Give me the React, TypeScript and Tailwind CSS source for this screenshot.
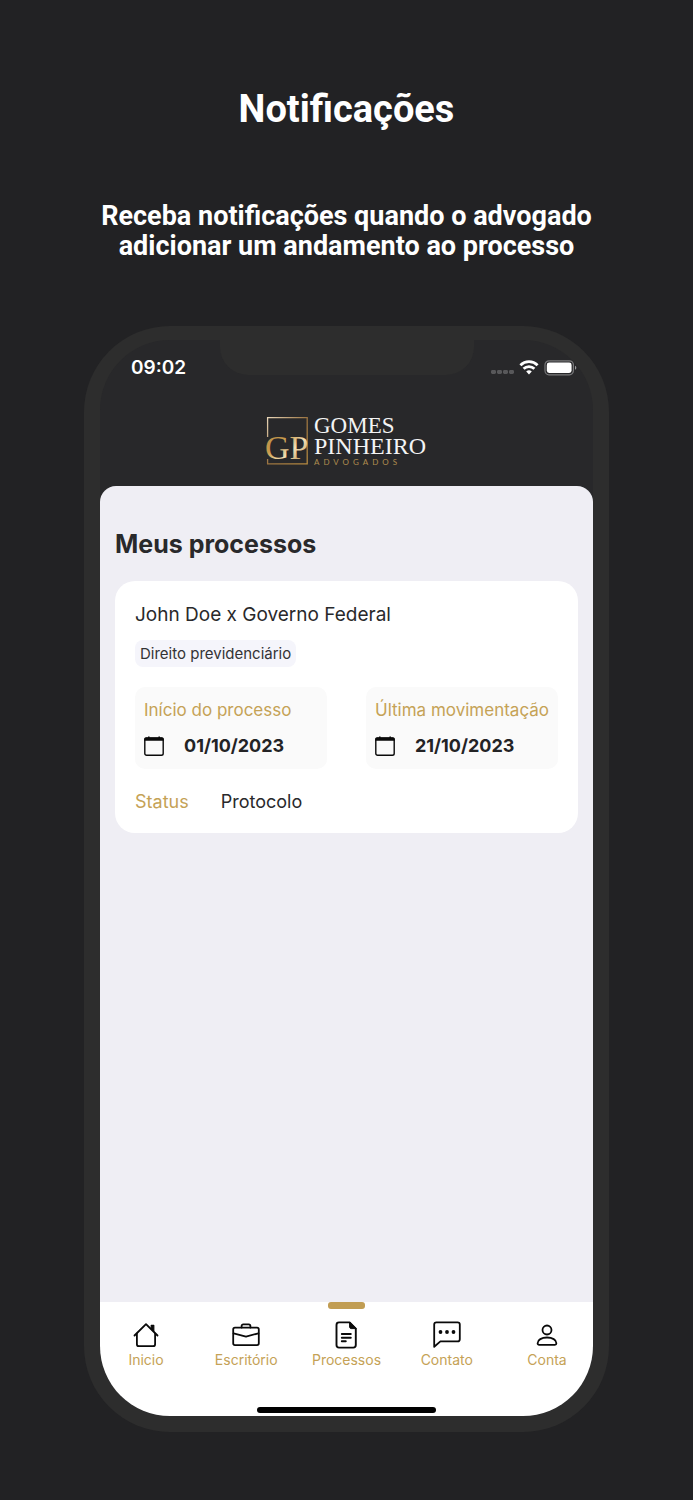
import type { ReactNode } from "react";

type Tab = {
  label: string;
  icon: ReactNode;
  active?: boolean;
};

const HomeIcon = () => (
  <svg viewBox="0 0 28 28" className="size-7" fill="none" stroke="#0a0a0a" strokeWidth="1.8" strokeLinecap="round" strokeLinejoin="round" aria-hidden="true">
    <path d="M2.5 14.5 14 3.2l11.5 11.3" />
    <path d="M4.9 12.6v10.6c0 1.1.9 2 2 2h14.2c1.1 0 2-.9 2-2V12.6" />
    <path d="M19.2 4.4h2.6v6l-2.6-2.5z" fill="#0a0a0a" strokeWidth="1.2" />
  </svg>
);

const BriefcaseIcon = () => (
  <svg viewBox="0 0 28 28" className="size-7" fill="none" stroke="#0a0a0a" strokeWidth="1.8" strokeLinecap="round" strokeLinejoin="round" aria-hidden="true">
    <rect x="1.2" y="6.7" width="25.6" height="17.4" rx="1.8" />
    <path d="M9.6 6.5V5c0-1 .7-1.7 1.7-1.7h5.4c1 0 1.7.7 1.7 1.7v1.5" />
    <path d="M1.6 12.3 14 15.6l12.4-3.3" />
  </svg>
);

const DocumentIcon = () => (
  <svg viewBox="0 0 28 28" className="size-7" fill="none" stroke="#0a0a0a" strokeWidth="1.9" strokeLinecap="round" strokeLinejoin="round" aria-hidden="true">
    <path d="M17.6 1.4H7c-1.4 0-2.5 1.1-2.5 2.5v20.2c0 1.4 1.1 2.5 2.5 2.5h14.3c1.4 0 2.5-1.1 2.5-2.5V7.6z" />
    <path d="M17.6 1.4v4.7c0 .8.7 1.5 1.5 1.5h4.7z" fill="#0a0a0a" strokeWidth="1" />
    <path d="M9.8 13h9M9.8 16.7h9M9.8 20.3h4" />
  </svg>
);

const ChatIcon = () => (
  <svg viewBox="0 0 28 28" className="size-7" fill="none" stroke="#0a0a0a" strokeWidth="1.8" strokeLinecap="round" strokeLinejoin="round" aria-hidden="true">
    <path d="M1.2 25.8V3.6c0-1.2 1-2.2 2.2-2.2h21.2c1.2 0 2.2 1 2.2 2.2v14.6c0 1.2-1 2.2-2.2 2.2H7.4z" />
    <g fill="#0a0a0a" stroke="none">
      <circle cx="7.5" cy="11" r="1.9" />
      <circle cx="14" cy="11" r="1.9" />
      <circle cx="20.5" cy="11" r="1.9" />
    </g>
  </svg>
);

const PersonIcon = () => (
  <svg viewBox="0 0 28 28" className="size-7" fill="none" stroke="#0a0a0a" strokeWidth="1.8" strokeLinejoin="round" aria-hidden="true">
    <circle cx="14" cy="9" r="4.5" />
    <path d="M4.6 22.3c0-3.4 4-5.8 9.4-5.8s9.4 2.4 9.4 5.8c0 .9-.6 1.5-1.5 1.5H6.1c-.9 0-1.5-.6-1.5-1.5z" />
  </svg>
);

const CalendarIcon = () => (
  <svg viewBox="0 0 20 20" className="size-5" fill="none" aria-hidden="true">
    <rect x=".8" y="2.2" width="18.4" height="17" rx="1.8" stroke="#0a0a0a" strokeWidth="1.4" />
    <path d="M.2 4.8V3c0-1 .8-1.8 1.8-1.8h2V.4h1.6v.8h8.8V.4H16v.8h2c1 0 1.8.8 1.8 1.8v1.8z" fill="#0a0a0a" />
  </svg>
);

const Logo = () => (
  <svg viewBox="0 -8 162 60" className="h-[60px] w-[162px]" role="img" aria-label="Gomes Pinheiro Advogados">
    <defs>
      <linearGradient id="gold" x1="0" y1="0" x2="1" y2="1">
        <stop offset="0" stopColor="#b08a4a" />
        <stop offset=".35" stopColor="#c79a4b" />
        <stop offset=".6" stopColor="#f3dfb4" />
        <stop offset="1" stopColor="#a87a32" />
      </linearGradient>
      <linearGradient id="frame" x1="0" y1="0" x2="1" y2="1">
        <stop offset="0" stopColor="#e8d6b8" />
        <stop offset=".5" stopColor="#9a7340" />
        <stop offset="1" stopColor="#b5893f" />
      </linearGradient>
    </defs>
    <path d="M1.6 21V1.6h39.6v46.2H1.6V43" fill="none" stroke="url(#frame)" strokeWidth="1.3" />
    <text x="-1" y="43" fontSize="34" fill="url(#gold)" className="font-['Liberation_Serif',serif]">GP</text>
    <g fill="#f4f4f4" className="font-['Liberation_Serif',serif]">
      <text x="48" y="17" fontSize="23">GOMES</text>
      <text x="48" y="38" fontSize="24">PINHEIRO</text>
    </g>
    <text x="48" y="49" fontSize="8" fill="#b08d4f" className="font-[Lato,sans-serif] tracking-[4px]">ADVOGADOS</text>
  </svg>
);

const StatusIcons = () => (
  <svg viewBox="0 0 88 18" className="h-[18px] w-[88px]" aria-hidden="true">
    <g fill="#58585a">
      <rect x="1" y="11" width="5" height="4" rx="1.4" />
      <rect x="7" y="11" width="5" height="4" rx="1.4" />
      <rect x="13" y="11" width="5" height="4" rx="1.4" />
      <rect x="19" y="11" width="5" height="4" rx="1.4" />
    </g>
    <g fill="none" stroke="#fff" strokeWidth="2.8">
      <path d="M30.4 6.2a12.3 12.3 0 0 1 17.2 0" />
      <path d="M33.6 9.8a7.8 7.8 0 0 1 10.8 0" />
    </g>
    <path d="M36.2 12.4a4.2 4.2 0 0 1 5.6 0L39 15.4z" fill="#fff" />
    <rect x="55" y="1.8" width="28.4" height="14" rx="4" fill="none" stroke="#78787a" strokeWidth="1.2" />
    <rect x="56.8" y="3.6" width="24.8" height="10.4" rx="2.4" fill="#fff" />
    <path d="M85 6.8c1.8.8 1.8 3.2 0 4z" fill="#9a9a9c" />
  </svg>
);

const tabs: Tab[] = [
  { label: "Inicio", icon: <HomeIcon /> },
  { label: "Escritório", icon: <BriefcaseIcon /> },
  { label: "Processos", icon: <DocumentIcon />, active: true },
  { label: "Contato", icon: <ChatIcon /> },
  { label: "Conta", icon: <PersonIcon /> },
];

const dates = [
  { label: "Início do processo", value: "01/10/2023" },
  { label: "Última movimentação", value: "21/10/2023" },
];

function StatusBar() {
  return (
    <div className="flex items-center justify-between pt-4 pr-[15px] pl-[31px]">
      <span className="text-[19px] leading-6 font-semibold text-white">09:02</span>
      <StatusIcons />
    </div>
  );
}

function ProcessCard() {
  return (
    <article className="rounded-[20px] bg-white px-5 pt-5 pb-[18px]">
      <h3 className="text-[19px] leading-7 text-[#29292b]">John Doe x Governo Federal</h3>
      <span className="mt-[11px] inline-block rounded-lg bg-[#f5f5fb] px-[5px] text-[15px] leading-[27px] text-[#333335]">
        Direito previdenciário
      </span>
      <dl className="mt-5 grid grid-cols-2 gap-[39px]">
        {dates.map((date) => (
          <div key={date.label} className="rounded-[10px] bg-[#fafafa] px-[9px] py-2.5">
            <dt className="text-[17px] leading-[26px] whitespace-nowrap text-[#c5a256]">{date.label}</dt>
            <dd className="mt-2.5 flex items-center gap-5 text-lg leading-[26px] font-bold text-[#232325]">
              <CalendarIcon />
              {date.value}
            </dd>
          </div>
        ))}
      </dl>
      <p className="mt-5 flex gap-8 text-lg leading-[26px] text-[#29292b]">
        <span className="text-[#c5a256]">Status</span>
        <span>Protocolo</span>
      </p>
    </article>
  );
}

function TabBar() {
  return (
    <nav className="bg-white pb-[3px]">
      <ul className="flex justify-between px-1.5">
        {tabs.map((tab) => (
          <li key={tab.label} className="flex w-20 flex-col items-center">
            <span className={tab.active ? "h-[7px] w-[37px] rounded-[3px] bg-[#c19d53]" : "h-[7px] w-[37px]"} />
            <a href="#" className="mt-3 flex flex-col items-center gap-px text-sm leading-5 text-[#c5a256]">
              {tab.icon}
              {tab.label}
            </a>
          </li>
        ))}
      </ul>
      <div className="mx-auto mt-[37px] h-1.5 w-[179px] rounded-full bg-black" />
    </nav>
  );
}

export default function App() {
  return (
    <main className="flex min-h-screen flex-col bg-[#222224] px-[84px] pt-[86px] pb-[68px] font-[Inter,sans-serif]">
      <header className="text-center font-[Roboto,sans-serif] font-bold text-white">
        <h1 className="text-[38px] leading-[46px]">Notificações</h1>
        <p className="mt-[69px] text-[27px] leading-[30px]">
          Receba notificações quando o advogado adicionar um andamento ao processo
        </p>
      </header>

      <section className="mt-[65px] flex flex-1 flex-col rounded-[86px] bg-[#2d2d2d] px-4 pt-3.5 pb-4">
        <div className="relative flex flex-1 flex-col overflow-hidden rounded-[70px] bg-[#28282a]">
          <div className="absolute top-0 left-1/2 h-[35px] w-[254px] -translate-x-1/2 rounded-b-[28px] bg-[#2d2d2d]" />
          <StatusBar />
          <div className="mt-7 flex justify-center pb-[18px]">
            <Logo />
          </div>
          <div className="flex-1 rounded-t-[16px] bg-[#efeef4] px-[15px] pt-10">
            <h2 className="text-[25px] leading-9 font-bold text-[#29292b]">Meus processos</h2>
            <div className="mt-[19px]">
              <ProcessCard />
            </div>
          </div>
          <TabBar />
        </div>
      </section>
    </main>
  );
}
